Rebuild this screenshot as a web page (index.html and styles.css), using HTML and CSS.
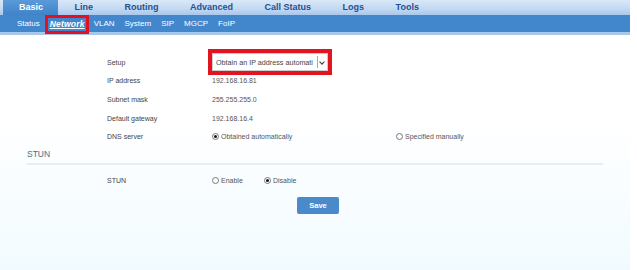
FILE: index.html
```html
<!DOCTYPE html>
<html lang="en">
<head>
    <meta charset="UTF-8">
    <title>Network</title>
    <link rel="stylesheet" href="styles.css">
</head>
<body>
    <div class="page">
        <div class="topnav">
            <a class="tab active">Basic</a>
            <a class="tab">Line</a>
            <a class="tab">Routing</a>
            <a class="tab">Advanced</a>
            <a class="tab">Call Status</a>
            <a class="tab">Logs</a>
            <a class="tab">Tools</a>
        </div>
        <div class="subnav">
            <a>Status</a>
            <a class="current">Network</a>
            <a>VLAN</a>
            <a>System</a>
            <a>SIP</a>
            <a>MGCP</a>
            <a>FoIP</a>
        </div>
        <div class="strip"></div>

        <div class="content">
            <div class="form-row">
                <span class="label">Setup</span>
                <span class="value">
                    <span class="select-wrap">
                        <span class="select">
                            <span class="select-text">Obtain an IP address automati</span>
                            <span class="select-arrow"></span>
                        </span>
                    </span>
                </span>
            </div>
            <div class="form-row">
                <span class="label">IP address</span>
                <span class="value">192.168.16.81</span>
            </div>
            <div class="form-row">
                <span class="label">Subnet mask</span>
                <span class="value">255.255.255.0</span>
            </div>
            <div class="form-row">
                <span class="label">Default gateway</span>
                <span class="value">192.168.16.4</span>
            </div>
            <div class="form-row">
                <span class="label">DNS server</span>
                <span class="value radios wide">
                    <label class="radio"><span class="dot checked"></span>Obtained automatically</label>
                    <label class="radio"><span class="dot"></span>Specified manually</label>
                </span>
            </div>

            <h3 class="section-title">STUN</h3>

            <div class="form-row stun-row">
                <span class="label">STUN</span>
                <span class="value radios">
                    <label class="radio"><span class="dot"></span>Enable</label>
                    <label class="radio"><span class="dot checked"></span>Disable</label>
                </span>
            </div>

            <div class="actions">
                <button class="save">Save</button>
            </div>
        </div>
    </div>
</body>
</html>
```

FILE: styles.css
```css
* {
    margin: 0;
    padding: 0;
    box-sizing: border-box;
}

body {
    font-family: 'Liberation Sans', Arial, sans-serif;
    background: #fff;
    height: 270px;
    overflow: hidden;
}

.page {
    width: 630px;
    height: 270px;
    background: linear-gradient(180deg, #ffffff 0%, #ffffff 45%, #f1fbff 100%);
}

.topnav {
    height: 15px;
    display: flex;
    padding-left: 3px;
    background: linear-gradient(180deg, #d9e8f8 0%, #c2d8f2 60%, #a8c7ec 100%);
}

.tab {
    padding: 0 14.5px 0 15px;
    margin-right: 2px;
    font-size: 9px;
    font-weight: bold;
    line-height: 15px;
    color: #1f5192;
}

.tab.active {
    padding-left: 16px;
    background: linear-gradient(180deg, #5b9ad8 0%, #3f83c9 100%);
    color: #fff;
}

.subnav {
    height: 17px;
    display: flex;
    align-items: center;
    gap: 10px;
    padding-left: 17px;
    background: #4287cc;
}

.subnav a {
    font-size: 8px;
    color: #fff;
    line-height: 17px;
}

.subnav a.current {
    font-size: 8.5px;
    font-weight: bold;
    font-style: italic;
    text-decoration: underline;
    letter-spacing: 0.2px;
    outline: 3px solid #e21020;
    padding: 0 1px 0 2px;
    margin: 0 -2px 0 -2px;
    background: #4287cc;
    position: relative;
    top: 1px;
    line-height: 13px;
}

.strip {
    height: 3px;
    background: #a9c7eb;
}

.content {
    padding-top: 18px;
    font-size: 7px;
    color: #444;
}

.form-row {
    display: flex;
    align-items: center;
    height: 18.6px;
    padding-left: 107px;
}

.label {
    width: 105px;
}

.value {
    color: #555;
}

.select-wrap {
    display: inline-block;
    border: 4px solid #e3141f;
    margin-left: -4px;
}

.select {
    display: flex;
    width: 116px;
    height: 18px;
    background: #fff;
    border: 1px solid #ccc;
    align-items: center;
}

.select-text {
    flex: 1;
    overflow: hidden;
    white-space: nowrap;
    padding-left: 3px;
    color: #444;
    font-size: 7.2px;
}

.select-arrow {
    width: 9px;
    height: 12px;
    border-left: 1px solid #aaa;
    position: relative;
    margin-right: 1px;
}

.select-arrow::after {
    content: '';
    position: absolute;
    left: 2px;
    top: 4px;
    width: 3px;
    height: 3px;
    border-right: 1px solid #333;
    border-bottom: 1px solid #333;
    transform: rotate(45deg);
}

.radios {
    display: flex;
}

.radios .radio {
    display: flex;
    align-items: center;
    width: 52px;
}

.radios.wide .radio {
    width: 184px;
}

.dot {
    width: 7px;
    height: 7px;
    border: 1px solid #777;
    border-radius: 50%;
    background: #fff;
    margin-right: 2px;
    position: relative;
}

.dot.checked::after {
    content: '';
    position: absolute;
    left: 1px;
    top: 1px;
    width: 3px;
    height: 3px;
    border-radius: 50%;
    background: #111;
}

.section-title {
    font-size: 8.5px;
    font-weight: normal;
    color: #4d6c87;
    margin: 3px 27px 0;
    width: 576px;
    padding-bottom: 4px;
    border-bottom: 2px solid #e7edf0;
}

.stun-row {
    margin-top: 6px;
}

.actions {
    display: flex;
    justify-content: center;
    padding-left: 6px;
    margin-top: 7px;
}

.save {
    width: 42px;
    height: 17px;
    border: none;
    border-radius: 2px;
    background: #4a8acb;
    color: #fff;
    font-family: inherit;
    font-size: 7.5px;
    font-weight: bold;
}
```
